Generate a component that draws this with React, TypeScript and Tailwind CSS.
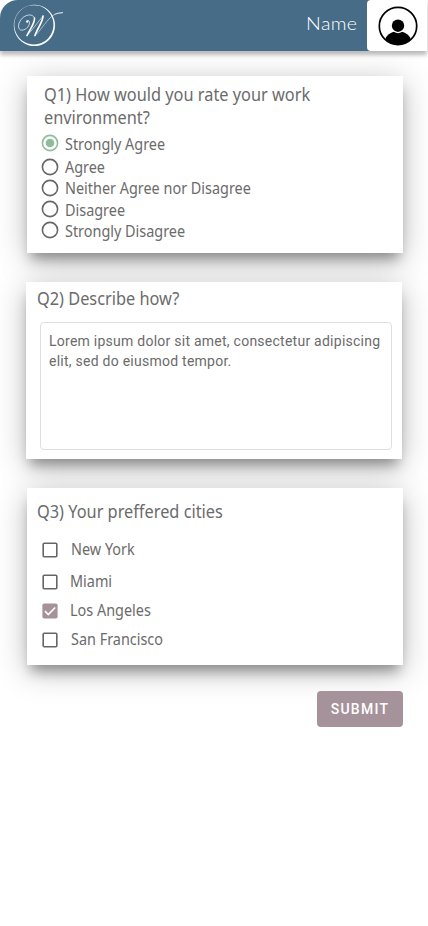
import React from "react";

const label =
  "origin-left whitespace-nowrap font-['Noto_Sans',sans-serif] text-[#6b6b6b] leading-[20px] text-[15.5px] scale-x-[0.93] -mt-[2px]";
const heading =
  "origin-left whitespace-nowrap font-['Noto_Sans',sans-serif] text-[#6b6b6b] leading-[23px] text-[17.6px] scale-x-[0.928]";
const card =
  "w-[376px] h-[177px] bg-white shadow-[0_10px_12px_-4px_rgba(0,0,0,0.34),0_6px_30px_rgba(0,0,0,0.26)]";

function Logo() {
  return (
    <svg className="ml-[10px] h-[51px] w-[58px]" viewBox="10 0 58 51" fill="none" stroke="#fff" strokeLinecap="round">
      <path
        d="M34.4 4.7a20.6 20.7 0 1 0 .01 0ZM33.9 5.2a19.6 19.6 0 1 1-.01 0Z"
        fill="#fff"
        fillRule="evenodd"
        stroke="none"
      />
      <circle cx="27.300" cy="21.500" r="1.200" fill="#fff" stroke="none" />
      <path
        d="M27 22c0-2 2.500-2 2.500.5c0 4.500-5 8.500-9 7.500c-4-2-1.500-10 3.500-13.300c5-3 10-2 10.500 1.800"
        strokeWidth=".7"
      />
      <path d="M34.500 18c.7 5-5 12-7.500 17.500" strokeWidth="1.600" />
      <path d="M27 35.500c5-5 11-13.500 16-19.500" strokeWidth=".6" />
      <path d="M43 16c0 6-6 13-8 19.500" strokeWidth="1.700" />
      <path d="M35 35.500c5-4 10-13 16-18.500c4-3.300 8-4.800 12-4.400c-2 .7-5 .7-8 1.400" strokeWidth=".55" />
    </svg>
  );
}

function Avatar() {
  return (
    <svg className="h-[40px] w-[40px]" viewBox="0 0 40 40">
      <defs>
        <clipPath id="face">
          <circle cx="20" cy="20" r="18.500" />
        </clipPath>
      </defs>
      <g clipPath="url(#face)">
        <ellipse cx="20" cy="35.500" rx="13" ry="10.300" />
        <circle cx="20" cy="20" r="7.200" fill="#fff" />
        <circle cx="20" cy="19.700" r="6.200" />
      </g>
      <circle cx="20" cy="20" r="18.700" fill="none" stroke="#000" strokeWidth="1.700" />
    </svg>
  );
}

function Radio({ checked = false }: { checked?: boolean }) {
  return (
    <svg className="h-[18px] w-[18px] shrink-0" viewBox="0 0 18 18" fill="none">
      <circle cx="9" cy="9" r="7.600" stroke={checked ? "#8fbc9a" : "#666"} strokeWidth="1.600" />
      {checked && <circle cx="9" cy="9" r="4.300" fill="#8fbc9a" />}
    </svg>
  );
}

function Checkbox({ checked = false }: { checked?: boolean }) {
  return (
    <svg className="h-[16px] w-[16px] shrink-0" viewBox="0 0 16 16" fill="none">
      {checked ? (
        <>
          <rect x=".4" y=".4" width="15.200" height="15.200" rx="1.800" fill="#a6929a" />
          <path d="m3 8.200 3.300 3.300L13.200 4.500" stroke="#fff" strokeWidth="1.700" />
        </>
      ) : (
        <rect x="1.200" y="1.200" width="13.600" height="13.600" rx="1" stroke="#666" strokeWidth="1.600" />
      )}
    </svg>
  );
}

const answers = [
  { text: "Strongly Agree", row: "h-[24px]", dot: "-mt-[4px]" },
  { text: "Agree", row: "h-[22px]", dot: "-mt-[2px]" },
  { text: "Neither Agree nor Disagree", row: "h-[20px]", dot: "-mt-[2px]" },
  { text: "Disagree", row: "h-[23px]", dot: "-mt-[4px]" },
  { text: "Strongly Disagree", row: "h-[20px]", dot: "-mt-[4px]" },
];

const cities = [
  { text: "New York", row: "h-[32px]", gap: "gap-[13px]" },
  { text: "Miami", row: "h-[31px]", gap: "gap-[12px]" },
  { text: "Los Angeles", row: "h-[28px]", gap: "gap-[12px]" },
  { text: "San Francisco", row: "h-[30px]", gap: "gap-[13px]" },
];

export default function App() {
  return (
    <div className="h-[926px] w-[428px] overflow-hidden bg-white">
      <header className="relative z-10 flex h-[51px] w-[427px] items-center rounded-tl-[18px] bg-[#466c87] shadow-[0_4px_4px_rgba(0,0,0,0.27)]">
        <Logo />
        <span className="mb-[6px] ml-auto mr-[10px] origin-right scale-x-[1.06] font-['Lato',sans-serif] text-[18.5px] font-light leading-[24px] tracking-[0.3px] text-white">
          Name
        </span>
        <div className="flex h-[51px] w-[60px] items-center justify-center rounded-l-[4px] bg-white pl-[2px]">
          <Avatar />
        </div>
      </header>

      <main className="flex flex-col pt-[25px]">
        <section className={`${card} ml-[27px] pt-[7px]`}>
          <h2 className={`${heading} ml-[17px]`}>
            Q1) How would you rate your work
            <br />
            environment?
          </h2>
          <div className="ml-[14px] mt-[4px] flex flex-col">
            {answers.map((a) => (
              <label key={a.text} className={`flex items-center gap-[6px] ${a.row}`}>
                <span className={a.dot}>
                  <Radio checked={a.text === "Strongly Agree"} />
                </span>
                <span className={label}>{a.text}</span>
              </label>
            ))}
          </div>
        </section>

        <section className={`${card} ml-[26px] mt-[29px] pt-[5px]`}>
          <h2 className={`${heading} ml-[11px]`}>Q2) Describe how?</h2>
          <div className="ml-[14px] mt-[12px] h-[128px] w-[352px] whitespace-nowrap rounded-[4px] border border-[#dedede] px-[8px] pt-[8px] font-['Roboto',sans-serif] text-[14px] leading-[20px] tracking-[0.25px] text-[#6b6b6b]">
            Lorem ipsum dolor sit amet, consectetur adipiscing
            <br />
            elit, sed do eiusmod tempor.
          </div>
        </section>

        <section className={`${card} ml-[27px] mt-[29px] pt-[12px]`}>
          <h2 className={`${heading} ml-[10px]`}>Q3) Your preffered cities</h2>
          <div className="ml-[15px] mt-[11px] flex flex-col">
            {cities.map((c) => (
              <label key={c.text} className={`flex items-center ${c.gap} ${c.row}`}>
                <Checkbox checked={c.text === "Los Angeles"} />
                <span className={label}>{c.text}</span>
              </label>
            ))}
          </div>
        </section>

        <button className="ml-[317px] mt-[26px] h-[36px] w-[86px] rounded-[4px] bg-[#a6929a] font-['Roboto',sans-serif] text-[14px] font-medium tracking-[1.25px] text-white">
          SUBMIT
        </button>
      </main>
    </div>
  );
}
